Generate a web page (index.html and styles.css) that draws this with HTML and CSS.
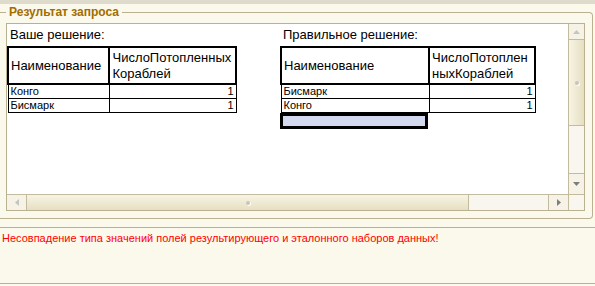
FILE: index.html
```html
<!DOCTYPE html>
<html lang="ru">
<head>
  <meta charset="UTF-8">
  <title>Результат запроса</title>
  <link rel="stylesheet" href="styles.css">
</head>
<body>
  <div class="topbar"></div>

  <fieldset class="group">
    <legend>Результат запроса</legend>
    <div class="result">
      <div class="sheet">
        <div class="panel panel-mine">
          <div class="caption">Ваше решение:</div>
          <table class="grid">
            <colgroup><col style="width:103px"><col style="width:127px"></colgroup>
            <tr class="head"><th>Наименование</th><th>ЧислоПотопленных<br>Кораблей</th></tr>
            <tr><td>Конго</td><td class="num">1</td></tr>
            <tr><td>Бисмарк</td><td class="num">1</td></tr>
          </table>
        </div>
        <div class="panel panel-right">
          <div class="caption">Правильное решение:</div>
          <table class="grid">
            <colgroup><col style="width:148px"><col style="width:106px"></colgroup>
            <tr class="head"><th>Наименование</th><th>ЧислоПотоплен<br>ныхКораблей</th></tr>
            <tr><td>Бисмарк</td><td class="num">1</td></tr>
            <tr><td>Конго</td><td class="num">1</td></tr>
          </table>
          <div class="cursor"></div>
        </div>
      </div>

      <div class="vscroll">
        <div class="btn btn-up">
          <svg width="7" height="4" viewBox="0 0 7 4"><polygon points="3.5,0 7,4 0,4" fill="#c4c4c0"/></svg>
        </div>
        <div class="thumb thumb-v"><span class="grip"></span></div>
        <div class="track"></div>
        <div class="btn btn-down">
          <svg width="7" height="4" viewBox="0 0 7 4"><polygon points="0,0 7,0 3.5,4" fill="#7d7d7d"/></svg>
        </div>
      </div>

      <div class="hscroll">
        <div class="btn btn-left">
          <svg width="4" height="7" viewBox="0 0 4 7"><polygon points="0,3.5 4,0 4,7" fill="#c4c4c0"/></svg>
        </div>
        <div class="thumb thumb-h"><span class="grip"></span></div>
        <div class="track"></div>
        <div class="btn btn-right">
          <svg width="4" height="7" viewBox="0 0 4 7"><polygon points="0,0 4,3.5 0,7" fill="#7d7d7d"/></svg>
        </div>
      </div>

      <div class="corner"></div>
    </div>
  </fieldset>

  <div class="message">Несовпадение типа значений полей результирующего и эталонного наборов данных!</div>
</body>
</html>
```

FILE: styles.css
```css
body {
  margin: 0;
  height: 286px;
  overflow: hidden;
  background: #fbf9ec;
  font-family: "Liberation Sans", Arial, sans-serif;
  color: #000;
}
.topbar {
  height: 4px;
  background: #dedbcd;
}
.group {
  margin: 0 2px 0 0;
  padding: 3px 7px 7px 6px;
  border: 1px solid #b9b192;
  border-left: none;
  border-radius: 0 4px 4px 0;
  min-width: 0;
}
.group legend {
  padding: 0 3px;
  font-weight: bold;
  font-size: 12px;
  line-height: 16px;
  color: #a26d00;
}
.result {
  box-sizing: border-box;
  height: 188px;
  border: 1px solid #b9b192;
  background: #fff;
  display: grid;
  grid-template-columns: 1fr 16px;
  grid-template-rows: 1fr 16px;
}
.sheet {
  display: flex;
  overflow: hidden;
}
.panel-mine {
  width: 230px;
}
.panel-right {
  width: 256px;
  margin-left: 43px;
}
.caption {
  font-size: 13px;
  line-height: 16px;
  padding: 3px 0 0 3px;
  margin-bottom: 3px;
  white-space: nowrap;
}
.grid {
  border-collapse: collapse;
  table-layout: fixed;
}
.grid th {
  height: 35px;
  padding: 0 2px;
  border: 2px solid #000;
  font-weight: normal;
  font-size: 13px;
  line-height: 16px;
  text-align: left;
  white-space: nowrap;
}
.grid td {
  height: 13px;
  padding: 0 2px;
  border: 1px solid #000;
  font-size: 11px;
  line-height: 13px;
}
.grid td.num {
  text-align: right;
}
.cursor {
  box-sizing: border-box;
  width: 148px;
  height: 16px;
  border: 3px solid #000;
  background: #d3d9ee;
}
.vscroll {
  display: flex;
  flex-direction: column;
  border-left: 1px solid #c3bb9d;
}
.hscroll {
  display: flex;
  border-top: 1px solid #c3bb9d;
}
.btn {
  display: flex;
  align-items: center;
  justify-content: center;
  background: #f6f3e6;
}
.btn-up {
  height: 15px;
  border-bottom: 1px solid #c3bb9d;
}
.btn-down {
  height: 20px;
  border-top: 1px solid #c3bb9d;
}
.btn-left {
  width: 19px;
  border-right: 1px solid #c3bb9d;
}
.btn-right {
  width: 19px;
  border-left: 1px solid #c3bb9d;
}
.thumb {
  display: flex;
  align-items: center;
  justify-content: center;
}
.thumb-v {
  height: 85px;
  border-bottom: 1px solid #c3bb9d;
  background: linear-gradient(to right, #f7f4e4, #e6dfc1);
}
.thumb-h {
  width: 441px;
  border-right: 1px solid #c3bb9d;
  background: linear-gradient(to bottom, #f7f4e4, #e6dfc1);
}
.track {
  flex: 1;
  background: #f8f6ee;
}
.grip {
  width: 4px;
  height: 4px;
  border-radius: 50%;
  background: #c7c5bd;
  box-shadow: 1px 1px 0 #fff;
}
.corner {
  border-left: 1px solid #c3bb9d;
  border-top: 1px solid #c3bb9d;
  background: #f8f6ee;
}
.message {
  box-sizing: border-box;
  height: 57px;
  margin-top: 8px;
  padding: 3px 0 0 2px;
  border-top: 1px solid #b9b192;
  border-bottom: 1px solid #b9b192;
  font-size: 11px;
  line-height: 14px;
  color: #ff0000;
}
```
